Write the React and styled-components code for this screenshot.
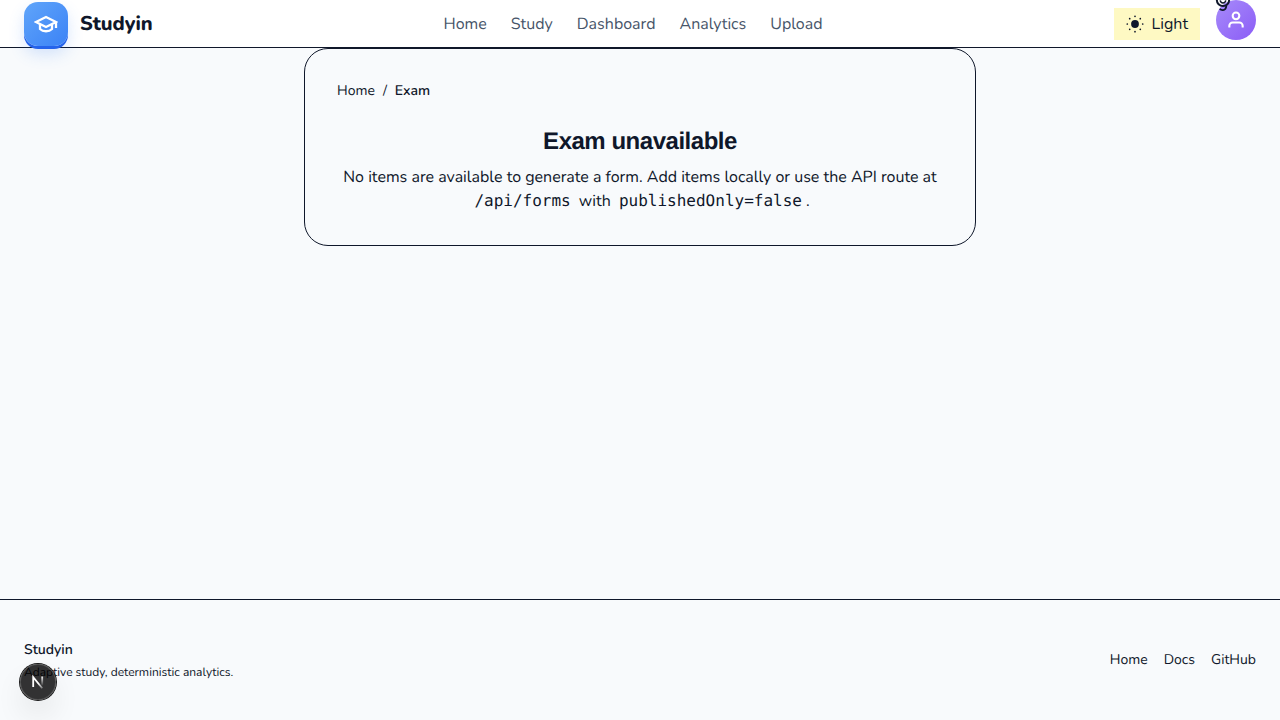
import React from "react";
import styled, { createGlobalStyle } from "styled-components";

const Global = createGlobalStyle`
  *, *::before, *::after { box-sizing: border-box; }
  body {
    margin: 0; background: #f8fafc; color: #0f172a;
    font-family: Nunito, Lato, "Liberation Sans", sans-serif; font-size: 16px; line-height: 24px;
    text-rendering: geometricPrecision; -webkit-font-smoothing: antialiased;
  }
  h1, p { margin: 0; }
`;
const Page = styled.div`display: flex; flex-direction: column; height: 720px; overflow: hidden;`;
const Header = styled.header`
  display: flex; align-items: center; justify-content: space-between;
  height: 48px; flex: none; padding: 0 24px; background: #fff; border-bottom: 1px solid #0f172a;
`;
const Brand = styled.a`display: flex; align-items: center; gap: 12px;`;
const Logo = styled.span`
  display: grid; place-items: center; width: 44px; height: 44px; border-radius: 14px; color: #fff;
  background: linear-gradient(135deg, #60a5fa, #3b82f6);
  box-shadow: 0 3px 0 #2563eb, 0 8px 16px rgba(59, 130, 246, 0.2);
`;
const BrandName = styled.span`font-size: 20px; font-weight: 800; line-height: 28px; padding-top: 2px;`;
const Nav = styled.nav`display: flex; gap: 24px; color: #475569; margin-right: 0.6px;`;
const NavLink = styled.a`white-space: nowrap;`;
const Actions = styled.div`display: flex; align-items: center; gap: 16px;`;
const Theme = styled.button`
  display: flex; align-items: center; gap: 7.6px; width: 86px; height: 32px; padding: 0 11px 0 12px;
  border: 0; background: #fef9c3; color: #0f172a; font: inherit; white-space: nowrap;
`;
const SunIcon = styled.svg`flex: none; width: 18px; height: 18px;`;
const Avatar = styled.div`
  position: relative; display: grid; place-items: center; width: 40px; height: 40px; margin-top: -7px;
  border-radius: 50%; color: #fff; background: linear-gradient(135deg, #a78bfa, #8b5cf6);
`;
const AvatarMark = styled.svg`position: absolute; left: -1px; top: 0; color: #0f172a;`;
const Main = styled.main`flex: 1; display: flex; flex-direction: column; align-items: center;`;
const Card = styled.section`width: 672px; height: 198px; padding: 32px; border: 1px solid #0f172a; border-radius: 24px;`;
const Crumbs = styled.nav`display: flex; gap: 8px; font-size: 14px; line-height: 20px; margin-bottom: 25px; b { font-weight: 600; }`;
const Title = styled.h1`font: 700 24px/32px "Liberation Sans", sans-serif; letter-spacing: -0.48px; text-align: center;`;
const Message = styled.p`margin-top: 7px; text-align: center;`;
const Code = styled.code`font: 16px/20px "DejaVu Sans Mono", monospace; padding: 0 4px;`;
const Footer = styled.footer`
  display: flex; align-items: center; justify-content: space-between; height: 121px; flex: none;
  padding: 0 24px; border-top: 1px solid #0f172a; font-size: 14px; line-height: 20px;
`;
const FooterBrand = styled.div`display: flex; flex-direction: column; gap: 4px; b { font-weight: 600; }`;
const Tagline = styled.span`font-size: 12px; line-height: 16px; padding-top: 1px; margin-bottom: -1px;`;
const Links = styled.nav`display: flex; gap: 16px;`;
const DevBadge = styled.div`
  position: absolute; left: 20px; top: 664px; width: 36px; height: 36px; border-radius: 50%;
  display: grid; place-items: center; background: rgba(0, 0, 0, 0.8);
  box-shadow: 0 0 0 1px #171717, inset 0 0 0 1px rgba(255, 255, 255, 0.14), 0 16px 32px -8px rgba(0, 0, 0, 0.24);
`;

const sunRays = [[9, 1.3], [9, 16.7], [1.3, 9], [16.7, 9], [3.7, 3.7], [14.3, 3.7], [3.7, 14.3], [14.3, 14.3]];

export default function App() {
  return (
    <Page>
      <Global />
      <Header>
        <Brand>
          <Logo>
            <svg width="24" height="24" viewBox="0 0 24 24" fill="none" stroke="currentColor" strokeWidth="2.3">
              <path d="M22 10v6M2 10l10-5 10 5-10 5z" />
              <path d="M6 12v5c3 3 9 3 12 0v-5" />
            </svg>
          </Logo>
          <BrandName>Studyin</BrandName>
        </Brand>
        <Nav>
          {["Home", "Study", "Dashboard", "Analytics", "Upload"].map((t) => <NavLink key={t}>{t}</NavLink>)}
        </Nav>
        <Actions>
          <Theme>
            <SunIcon viewBox="0 0 18 18" fill="currentColor">
              <circle cx="9" cy="9" r="3.9" />
              {sunRays.map(([x, y]) => <circle key={`${x}-${y}`} cx={x} cy={y} r="0.85" />)}
            </SunIcon>
            <span>Light</span>
          </Theme>
          <Avatar>
            <svg width="20" height="20" viewBox="0 0 24 24" fill="none" stroke="currentColor" strokeWidth="2.5">
              <path d="M20 21v-2a4 4 0 0 0-4-4H8a4 4 0 0 0-4 4v2" />
              <circle cx="12" cy="7" r="4" />
            </svg>
            <AvatarMark width="18" height="12" viewBox="0 0 18 12" fill="none" stroke="currentColor" strokeWidth="2">
              <circle cx="8" cy="-0.2" r="6.2" />
              <path d="M5.2 0.4Q5.6 2.9 8 2.9Q10.4 2.9 10.8 0.4" strokeWidth="1.5" />
              <path d="M4.7 8.8Q6 10.4 8 10.2Q11 9.9 11.4 5.5" strokeWidth="1.8" />
            </AvatarMark>
          </Avatar>
        </Actions>
      </Header>
      <Main>
        <Card>
          <Crumbs><span>Home</span><span>/</span><b>Exam</b></Crumbs>
          <Title>Exam unavailable</Title>
          <Message>
            No items are available to generate a form. Add items locally or use the API route at{" "}
            <Code>/api/forms</Code> with <Code>publishedOnly=false</Code>.
          </Message>
        </Card>
      </Main>
      <Footer>
        <FooterBrand><b>Studyin</b><Tagline>Adaptive study, deterministic analytics.</Tagline></FooterBrand>
        <Links><NavLink>Home</NavLink><NavLink>Docs</NavLink><NavLink>GitHub</NavLink></Links>
      </Footer>
      <DevBadge>
        <svg width="14" height="14" viewBox="0 0 14 14" fill="none" strokeWidth="1.8">
          <defs>
            <linearGradient id="stem" x1="0" y1="1" x2="0" y2="11" gradientUnits="userSpaceOnUse">
              <stop stopColor="#fff" /><stop offset="1" stopColor="#fff" stopOpacity="0" />
            </linearGradient>
            <linearGradient id="slash" x1="8" y1="8" x2="12" y2="13" gradientUnits="userSpaceOnUse">
              <stop stopColor="#fff" /><stop offset="1" stopColor="#fff" stopOpacity="0.3" />
            </linearGradient>
          </defs>
          <path d="M2.2 12V2.2L11.3 13.3" stroke="url(#slash)" />
          <path d="M11.2 1.5V10.5" stroke="url(#stem)" />
        </svg>
      </DevBadge>
    </Page>
  );
}
